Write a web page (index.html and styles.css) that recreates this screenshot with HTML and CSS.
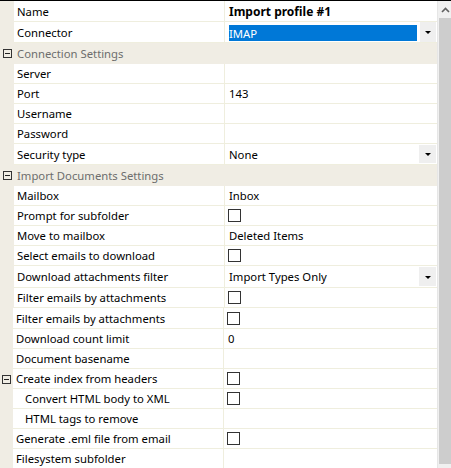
FILE: index.html
```html
<!DOCTYPE html>
<html>
<head>
<meta charset="utf-8">
<link rel="stylesheet" href="styles.css">
</head>
<body>
<div class="frame">
  <div class="grid">
    <div class="row h21"><div class="gut"></div><div class="lab">Name</div><div class="val bold">Import profile #1</div></div>
    <div class="row h21"><div class="gut"></div><div class="lab">Connector</div><div class="val combo"><span class="sel">IMAP</span><span class="btn"><span class="tri"></span></span></div></div>
    <div class="row cat h21"><div class="gut"><span class="exp"></span></div><div class="cattext">Connection Settings</div></div>
    <div class="row"><div class="gut"></div><div class="lab">Server</div><div class="val"></div></div>
    <div class="row"><div class="gut"></div><div class="lab">Port</div><div class="val">143</div></div>
    <div class="row"><div class="gut"></div><div class="lab">Username</div><div class="val"></div></div>
    <div class="row"><div class="gut"></div><div class="lab">Password</div><div class="val"></div></div>
    <div class="row h21"><div class="gut"></div><div class="lab">Security type</div><div class="val combo"><span class="plain">None</span><span class="btn b2"><span class="tri"></span></span></div></div>
    <div class="row cat h21"><div class="gut"><span class="exp"></span></div><div class="cattext">Import Documents Settings</div></div>
    <div class="row"><div class="gut"></div><div class="lab">Mailbox</div><div class="val">Inbox</div></div>
    <div class="row"><div class="gut"></div><div class="lab">Prompt for subfolder</div><div class="val"><span class="chk"></span></div></div>
    <div class="row"><div class="gut"></div><div class="lab">Move to mailbox</div><div class="val">Deleted Items</div></div>
    <div class="row"><div class="gut"></div><div class="lab">Select emails to download</div><div class="val"><span class="chk"></span></div></div>
    <div class="row h22"><div class="gut"></div><div class="lab">Download attachments filter</div><div class="val combo"><span class="plain">Import Types Only</span><span class="btn b2"><span class="tri"></span></span></div></div>
    <div class="row"><div class="gut"></div><div class="lab">Filter emails by attachments</div><div class="val"><span class="chk"></span></div></div>
    <div class="row h21 s"><div class="gut"></div><div class="lab">Filter emails by attachments</div><div class="val"><span class="chk"></span></div></div>
    <div class="row s"><div class="gut"></div><div class="lab">Download count limit</div><div class="val">0</div></div>
    <div class="row s"><div class="gut"></div><div class="lab">Document basename</div><div class="val"></div></div>
    <div class="row s"><div class="gut"><span class="exp"></span></div><div class="lab">Create index from headers</div><div class="val"><span class="chk"></span></div></div>
    <div class="row s"><div class="gut"></div><div class="lab sub">Convert HTML body to XML</div><div class="val"><span class="chk"></span></div></div>
    <div class="row s"><div class="gut"></div><div class="lab sub">HTML tags to remove</div><div class="val"></div></div>
    <div class="row s"><div class="gut"></div><div class="lab">Generate .eml file from email</div><div class="val"><span class="chk"></span></div></div>
    <div class="row s"><div class="gut"></div><div class="lab">Filesystem subfolder</div><div class="val"></div></div>
  </div>
  <div class="scroll">
    <div class="up"><svg width="9" height="6" viewBox="0 0 9 6"><path d="M1 5 L4.5 1.5 L8 5" fill="none" stroke="#606060" stroke-width="1.6"/></svg></div>
    <div class="thumb"></div>
    <div class="down"></div>
  </div>
</div>
</body>
</html>
```
FILE: styles.css
```css
html, body {
  margin: 0;
  padding: 0;
}
body {
  width: 451px;
  height: 468px;
  overflow: hidden;
  background: #ffffff;
  font-family: "Noto Sans", "Open Sans", sans-serif;
  font-size: 11.3px;
  color: #000;
}
.frame {
  display: flex;
  border-top: 1px solid #000;
  height: 467px;
}
.grid {
  width: 437px;
  border-right: 1px solid #e6e6e6;
  background: #ffffff;
  overflow: hidden;
  flex: none;
}
.row {
  display: flex;
  height: 20px;
  box-sizing: border-box;
}
.row.h21 { height: 21px; }
.row.h22 { height: 22px; }
.row.s { margin-left: -1px; }
.gut {
  width: 14px;
  flex: none;
  background: #f0ede4;
  display: flex;
  align-items: center;
}
.lab {
  flex: none;
  border-right: 1px solid #efeede;
  border-bottom: 1px solid #efeede;
  padding-left: 3px;
  box-sizing: border-box;
  width: 211px;
  display: flex;
  align-items: center;
  white-space: nowrap;
  overflow: hidden;
}
.lab.sub { padding-left: 12px; }
.val {
  flex: 1;
  border-bottom: 1px solid #efeede;
  padding-left: 4px;
  display: flex;
  align-items: center;
  white-space: nowrap;
}
.val.bold { font-weight: bold; font-size: 12px; }
.cattext {
  flex: 1;
  background: #f0ede4;
  color: #6d6d6d;
  padding-left: 3px;
  display: flex;
  align-items: center;
}
.exp {
  width: 9px;
  height: 9px;
  box-sizing: border-box;
  border: 1px solid #333;
  margin-left: 3px;
  position: relative;
}
.exp::after {
  content: "";
  position: absolute;
  left: 1px;
  right: 1px;
  top: 3px;
  height: 1px;
  background: #222;
}
.chk {
  width: 13px;
  height: 13px;
  box-sizing: border-box;
  border: 1px solid #333;
  background: #fff;
  margin-left: -1px;
}
.val.combo {
  padding-left: 4px;
  padding-right: 1px;
  align-items: stretch;
}
.sel {
  flex: 1;
  background: #0078d7;
  color: #fff;
  margin: 3px 3px 1px 0;
  display: flex;
  align-items: center;
}
.plain {
  flex: 1;
  display: flex;
  align-items: center;
}
.btn {
  width: 16px;
  background: #efefef;
  display: flex;
  align-items: center;
  justify-content: center;
  flex: none;
}
.btn.b2 { width: 17px; margin: 1px 0; }
.tri {
  width: 0;
  height: 0;
  border-left: 3px solid transparent;
  border-right: 3px solid transparent;
  border-top: 3px solid #000;
  margin-top: 1px;
}
.scroll {
  width: 13px;
  flex: none;
  display: flex;
  flex-direction: column;
  background: #f0f0f0;
  padding-left: 1px;
  box-sizing: border-box;
}
.up {
  height: 17px;
  display: flex;
  align-items: center;
  justify-content: center;
}
.thumb {
  flex: 1;
  background: #cdcdcd;
}
.down {
  height: 4px;
}
```
